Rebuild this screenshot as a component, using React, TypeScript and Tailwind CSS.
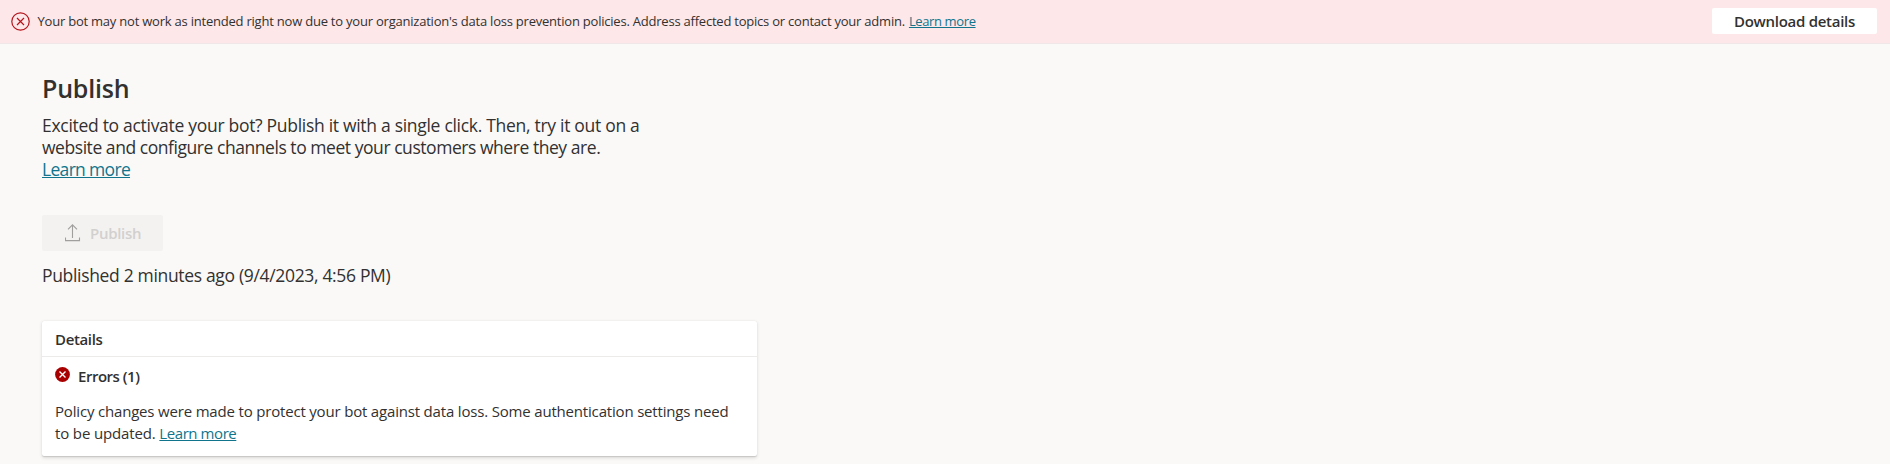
const link = "text-[#10758c] underline decoration-1 underline-offset-[1px]";

function ErrorOutlineIcon() {
  return (
    <svg className="size-[19px] shrink-0" viewBox="0 0 19 19" fill="none" stroke="#b3141b">
      <circle cx="9.5" cy="9.5" r="8.7" strokeWidth="1.2" />
      <path d="M6 6l7 7M13 6l-7 7" strokeWidth="1.2" />
    </svg>
  );
}

function ErrorBadgeIcon() {
  return (
    <svg className="size-[15px] shrink-0" viewBox="0 0 15 15">
      <circle cx="7.5" cy="7.5" r="7.4" fill="#a80000" />
      <path d="M4.5 4.5l6 6M10.5 4.5l-6 6" stroke="#fff" strokeWidth="1.4" />
    </svg>
  );
}

function UploadIcon() {
  return (
    <svg className="h-[18px] w-[16px] shrink-0" viewBox="0 0 16 18" fill="none" stroke="#a19f9d" strokeWidth="1.1">
      <path d="M7.5 14V1M3 5.4l4.5-4.6L12 5.4" />
      <path d="M.5 13.6v3h14v-3" />
    </svg>
  );
}

export default function App() {
  return (
    <div className="flex h-[464px] flex-col overflow-hidden bg-[#faf9f8] font-['Open_Sans','Segoe_UI',sans-serif] text-[#323130]">
      <div className="flex h-11 shrink-0 items-start border-b border-[#f0e8e8] bg-[#fde7e9] pr-[13px] pl-[11px]">
        <div className="flex pt-[11.5px]">
          <ErrorOutlineIcon />
        </div>
        <p className="ml-[7.5px] pt-[11px] text-[13px] leading-5 whitespace-nowrap">
          <span className="tracking-[-0.22px]">
            Your bot may not work as intended right now due to your organization's data loss prevention policies. Address affected topics or contact your admin.
          </span>
          <a href="#" className={`ml-[4px] tracking-[-0.38px] ${link}`}>Learn more</a>
        </p>
        <button className="mt-2 ml-auto flex h-[26px] w-[165px] justify-center rounded-[2px] bg-white pt-[3px] text-[15px] leading-5 font-semibold tracking-[-0.27px]">
          Download details
        </button>
      </div>

      <main className="flex flex-col items-start pt-7 pl-[42px]">
        <h1 className="text-[25px] leading-8 font-semibold tracking-[-0.2px]">Publish</h1>
        <div className="mt-[10px] flex flex-col items-start text-[17.5px] leading-[22px] whitespace-nowrap">
          <span className="tracking-[-0.295px]">Excited to activate your bot? Publish it with a single click. Then, try it out on a</span>
          <span className="tracking-[-0.45px]">website and configure channels to meet your customers where they are.</span>
          <a href="#" className={`tracking-[-0.68px] ${link}`}>Learn more</a>
        </div>

        <button disabled className="mt-[35px] flex h-9 w-[121px] items-center gap-[9px] rounded-[2px] bg-[#f3f2f1] pl-[23px] text-[15px] leading-5 font-semibold tracking-[-0.3px] text-[#d2d0ce]">
          <UploadIcon />
          Publish
        </button>
        <p className="mt-[13px] text-[17.5px] leading-[22px] tracking-[-0.33px] whitespace-nowrap">
          Published 2 minutes ago (9/4/2023, 4:56 PM)
        </p>

        <section className="mt-[35px] h-[135px] w-[715px] rounded-[2px] bg-white text-[15px] shadow-[0_1.6px_3.6px_rgba(0,0,0,0.13),0_0.3px_0.9px_rgba(0,0,0,0.11)]">
          <h2 className="h-9 border-b border-[#edebe9] pt-2 pl-[13px] leading-5 font-semibold tracking-[-0.35px]">Details</h2>
          <div className="flex pt-[9px] pl-[13px]">
            <div className="pt-px">
              <ErrorBadgeIcon />
            </div>
            <h3 className="ml-[8px] leading-5 font-semibold tracking-[-0.48px]">Errors (1)</h3>
          </div>
          <div className="mt-[14px] pl-[13px] leading-[22px] whitespace-nowrap">
            <p className="tracking-[-0.18px]">
              Policy changes were made to protect your bot against data loss. Some authentication settings need
            </p>
            <p>
              <span className="tracking-[-0.14px]">to be updated. </span>
              <a href="#" className={`tracking-[-0.43px] ${link}`}>Learn more</a>
            </p>
          </div>
        </section>
      </main>
    </div>
  );
}
